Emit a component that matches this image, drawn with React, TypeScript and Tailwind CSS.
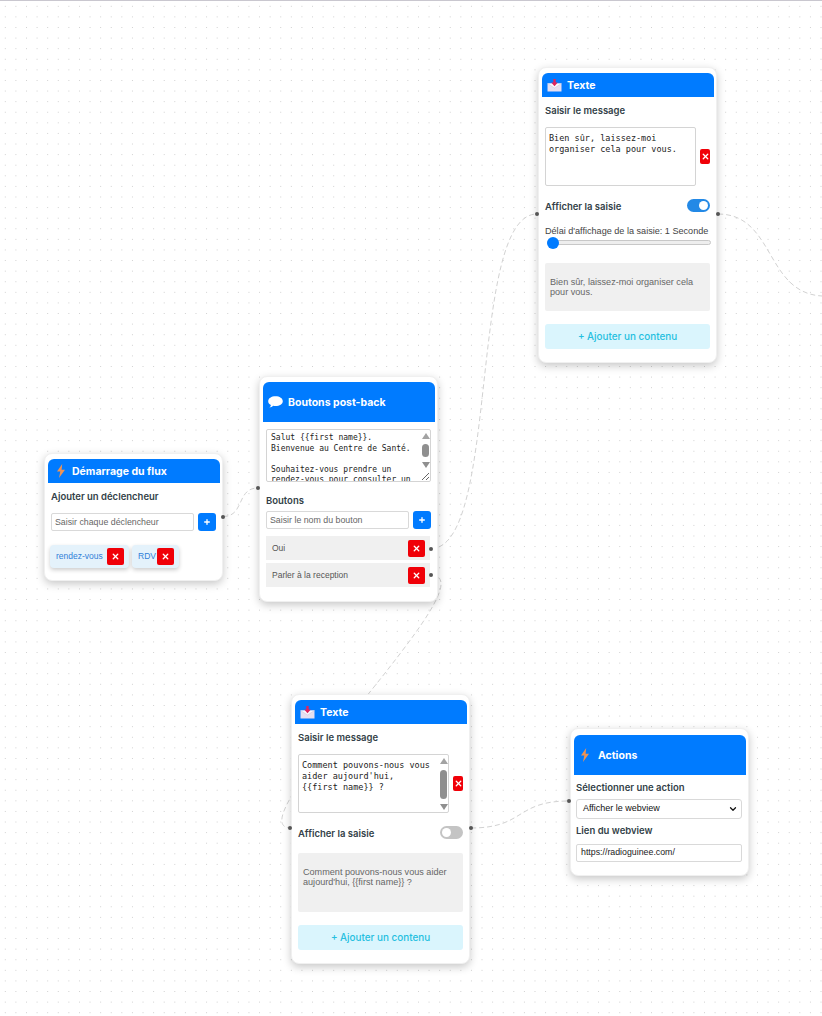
import React from 'react';
import { Plus, X, ChevronDown } from 'lucide-react';

const Bolt = () => (
  <svg width="10" height="14" viewBox="0 0 10 14" className="shrink-0">
    <path d="M6.2 0 L1 7.6 L4.3 7.6 L3 14 L9 5.8 L5.6 5.8 Z" fill="#ee9355" />
  </svg>
);

const Mail = () => (
  <svg width="15" height="13" viewBox="0 0 15 13" className="shrink-0">
    <path d="M0.5 4.5 L14.5 4.5 L14.5 12.5 L0.5 12.5 Z" fill="#e6dff0" />
    <path d="M0.5 4.5 L7.5 9 L14.5 4.5" fill="#fbf8fd" stroke="#cfc6dd" strokeWidth="0.6" />
    <path d="M6.3 0 L8.7 0 L8.7 3.4 L10.8 3.4 L7.5 7.2 L4.2 3.4 L6.3 3.4 Z" fill="#e0245e" />
  </svg>
);

const Bubble = () => (
  <svg width="15" height="12" viewBox="0 0 15 12" className="shrink-0">
    <path d="M7.5 0.3 C11.6 0.3 14.8 2.4 14.8 5.2 C14.8 8 11.6 10 7.5 10 C6.6 10 5.9 9.9 5.1 9.8 C4.2 10.8 2.8 11.5 1.4 11.6 C2.3 10.9 2.8 10 2.9 9 C1.2 8.1 0.2 6.8 0.2 5.2 C0.2 2.4 3.4 0.3 7.5 0.3 Z" fill="#fff" />
  </svg>
);

const Header = ({ icon, title, className = '' }: { icon: React.ReactNode; title: string; className?: string }) => (
  <div className={`flex items-center bg-[#007bff] rounded-t-[6px] text-white font-bold text-[10.5px] ${className}`}>
    {icon}
    <span className="pt-[2px]">{title}</span>
  </div>
);

const Handle = ({ className }: { className: string }) => (
  <div className={`absolute w-[4px] h-[4px] rounded-full bg-[#555] z-10 ${className}`} />
);

const Label = ({ children, className = '' }: { children: React.ReactNode; className?: string }) => (
  <div className={`text-[9.5px] font-semibold text-[#333f48] leading-[14px] ${className}`}>{children}</div>
);

const DelButton = ({ className = '' }: { className?: string }) => (
  <button className={`flex items-center justify-center bg-[#f00008] rounded-[2px] text-white shrink-0 ${className}`}>
    <X size={9} strokeWidth={3.5} />
  </button>
);

const AddButton = () => (
  <button className="w-[18px] h-[18px] rounded-[3px] bg-[#007bff] text-white flex items-center justify-center shrink-0">
    <Plus size={8} strokeWidth={4} />
  </button>
);

const FakeScrollbar = ({ className, thumb }: { className: string; thumb: string }) => (
  <div className={`absolute right-0 w-[11px] flex flex-col items-center justify-between ${className}`}>
    <div className="w-0 h-0 border-l-[4px] border-r-[4px] border-b-[6px] border-l-transparent border-r-transparent border-b-[#a3a3a3]" />
    <div className={`w-[7px] rounded-full bg-[#8f8f8f] ${thumb}`} />
    <div className="w-0 h-0 border-l-[4px] border-r-[4px] border-t-[6px] border-l-transparent border-r-transparent border-t-[#8f8f8f]" />
  </div>
);

const TextInput = ({ placeholder }: { placeholder: string }) => (
  <input
    placeholder={placeholder}
    className="flex-1 min-w-0 h-[18px] px-[3px] bg-white border border-[#d9d9d9] rounded-[2px] text-[8.8px] placeholder:text-[#666] outline-none"
  />
);

const Chip = ({ label, className = '' }: { label: string; className?: string }) => (
  <div className={`flex items-center justify-between h-[23px] pl-[6px] pr-[5px] rounded-[4px] bg-[#e4f2fb] shadow-[0_2px_4px_rgba(0,0,0,0.2)] text-[8.5px] text-[#2f80d8] ${className}`}>
    <span>{label}</span>
    <DelButton className="w-[17px] h-[17px]" />
  </div>
);

const ButtonRow = ({ label, className = '' }: { label: string; className?: string }) => (
  <div className={`flex items-center justify-between h-[24px] pl-[6px] pr-[5px] bg-[#f0f0f0] text-[8.5px] text-[#555] ${className}`}>
    <span>{label}</span>
    <DelButton className="w-[17px] h-[17px]" />
  </div>
);

const Toggle = ({ on }: { on: boolean }) => (
  <div className={`relative w-[23px] h-[13px] rounded-full ${on ? 'bg-[#2389e6]' : 'bg-[#c4c4c4]'}`}>
    <div className={`absolute top-[2px] w-[9px] h-[9px] rounded-full bg-white ${on ? 'right-[2px]' : 'left-[2px]'}`} />
  </div>
);

const AddContent = () => (
  <button className="block h-[25px] w-full rounded-[3px] bg-[#daf5fd] text-[#25bfe0] text-[9.9px] font-medium font-['Inter',sans-serif]">
    + Ajouter un contenu
  </button>
);

const Card = ({ className, children }: { className: string; children: React.ReactNode }) => (
  <div className={`absolute w-[179px] flex flex-col bg-white rounded-[8px] border border-[#f0f0f0] pl-[3px] pr-[2px] pt-[5px] shadow-[0_3px_8px_rgba(0,0,0,0.22)] font-['Inter',sans-serif] ${className}`}>
    {children}
  </div>
);

const monoArea = "block w-full h-full bg-white border border-[#d4d4d4] rounded-[2px] text-[#222] font-['DejaVu_Sans_Mono',monospace] outline-none overflow-hidden";

const StartNode = () => (
  <Card className="left-[44px] top-[453px] h-[128px]">
    <Header icon={<Bolt />} title="Démarrage du flux" className="h-[24px] pl-[8px] gap-[6px]" />
    <Label className="mt-[7px] ml-[3px]">Ajouter un déclencheur</Label>
    <div className="flex gap-[4px] mt-[9px] ml-[3px] mr-[4px] font-['Liberation_Sans',sans-serif]">
      <TextInput placeholder="Saisir chaque déclencheur" />
      <AddButton />
    </div>
    <div className="flex gap-[3px] mt-[14px] ml-[2px] font-['Liberation_Sans',sans-serif]">
      <Chip label="rendez-vous" className="w-[79px]" />
      <Chip label="RDV" className="w-[47px]" />
    </div>
    <Handle className="right-[-3px] top-[61px]" />
  </Card>
);

const ButtonsNode = () => (
  <Card className="left-[259px] top-[376px] h-[226px]">
    <Header icon={<Bubble />} title="Boutons post-back" className="h-[40px] pl-[5px] gap-[5px]" />
    <div className="relative h-[53px] mt-[7px] ml-[3px] mr-[4px]">
      <textarea
        readOnly
        className={`${monoArea} resize px-[4px] py-[3px] text-[8px] leading-[10.5px]`}
        value={"Salut {{first name}}.\nBienvenue au Centre de Santé.\n\nSouhaitez-vous prendre un\nrendez-vous pour consulter un"}
      />
      <FakeScrollbar className="top-[4px] h-[35px]" thumb="h-[13px]" />
    </div>
    <Label className="mt-[12px] ml-[3px]">Boutons</Label>
    <div className="flex gap-[4px] mt-[3px] ml-[3px] mr-[4px] font-['Liberation_Sans',sans-serif]">
      <TextInput placeholder="Saisir le nom du bouton" />
      <AddButton />
    </div>
    <div className="flex flex-col gap-[3px] mt-[7px] ml-[3px] mr-[5px] font-['Liberation_Sans',sans-serif]">
      <ButtonRow label="Oui" />
      <ButtonRow label="Parler à la reception" />
    </div>
    <Handle className="left-[-4px] top-[109px]" />
    <Handle className="right-[4px] top-[170px]" />
    <Handle className="right-[4px] top-[196px]" />
  </Card>
);

const TextNode = ({ className, message, preview, on, scroll, delay, previewClass, handleTop }: {
  className: string;
  message: string;
  preview: string;
  on: boolean;
  scroll?: boolean;
  delay?: boolean;
  previewClass: string;
  handleTop: string;
}) => (
  <Card className={className}>
    <Header icon={<Mail />} title="Texte" className="h-[24px] pl-[5px] gap-[5px]" />
    <Label className="mt-[7px] ml-[3px]">Saisir le message</Label>
    <div className="flex items-center gap-[4px] mt-[9px] ml-[3px] mr-[4px]">
      <div className="relative w-[151px] h-[59px]">
        <textarea readOnly className={`${monoArea} resize-none px-[3px] py-[5px] text-[8.5px] leading-[11px]`} value={message} />
        {scroll && <FakeScrollbar className="top-[4px] h-[52px]" thumb="h-[29px]" />}
      </div>
      <DelButton className="w-[10px] h-[15px]" />
    </div>
    <div className="flex items-start justify-between mt-[13px] ml-[3px] mr-[4px]">
      <Label className="pt-[1px]">Afficher la saisie</Label>
      <Toggle on={on} />
    </div>
    {delay && (
      <>
        <div className="mt-[10px] ml-[3px] text-[9.1px] leading-[14px] text-[#444] font-['Liberation_Sans',sans-serif] whitespace-nowrap">
          Délai d'affichage de la saisie: 1 Seconde
        </div>
        <div className="relative h-[5px] mt-[2px] ml-[5px] mr-[3px] rounded-full bg-[#eee] border border-[#c8c8c8]">
          <div className="absolute left-[-1px] top-[-4px] w-[12px] h-[12px] rounded-full bg-[#007bff]" />
        </div>
      </>
    )}
    <div className={`flex ml-[3px] mr-[4px] px-[5px] rounded-[2px] bg-[#f0f0f0] text-[9.1px] leading-[10px] text-[#666] font-['Liberation_Sans',sans-serif] ${previewClass}`}>
      <span>{preview}</span>
    </div>
    <div className="mt-[13px] ml-[3px] mr-[4px]">
      <AddContent />
    </div>
    <Handle className={`left-[-4px] ${handleTop}`} />
    <Handle className={`right-[-4px] ${handleTop}`} />
  </Card>
);

const ActionsNode = () => (
  <Card className="left-[570px] top-[728px] h-[148px]">
    <Header icon={<Bolt />} title="Actions" className="h-[40px] pl-[6px] gap-[8px] mt-[1px]" />
    <Label className="mt-[6px] ml-[2px]">Sélectionner une action</Label>
    <div className="flex items-center justify-between h-[20px] mt-[4px] ml-[2px] mr-[4px] pl-[6px] pr-[3px] border border-[#d9d9d9] rounded-[3px] text-[9px] text-[#111] font-['Liberation_Sans',sans-serif]">
      <span>Afficher le webview</span>
      <ChevronDown size={10} strokeWidth={3} />
    </div>
    <Label className="mt-[5px] ml-[2px]">Lien du webview</Label>
    <div className="flex items-center h-[18px] mt-[6px] ml-[2px] mr-[4px] pl-[4px] border border-[#d9d9d9] rounded-[2px] text-[8.8px] text-[#222] font-['Liberation_Sans',sans-serif]">
      https://radioguinee.com/
    </div>
    <Handle className="left-[-4px] top-[70px]" />
  </Card>
);

const Edges = () => (
  <svg className="absolute inset-0 w-full h-full" fill="none" stroke="#d2d2d2" strokeWidth="1" strokeDasharray="5 3">
    <path d="M223 516.5 C245 516.5 236 488 258 488" />
    <path d="M431 548.5 C500 548.5 468 214 537 214" />
    <path d="M431 575.5 C495 575.5 230 828 291 828" />
    <path d="M471 828 C525 828 515 801 569 801" />
    <path d="M718 214 C775 214 765 293 822 296" />
  </svg>
);

export default function App() {
  return (
    <div className="relative w-[822px] h-[1016px] overflow-hidden bg-white bg-[radial-gradient(#cfcfcf_0.8px,transparent_0.8px)] bg-[length:10.6px_10.6px] border-t border-[#c9c7cf]">
      <div className="absolute inset-0 top-[-1px]">
        <Edges />
        <StartNode />
        <ButtonsNode />
        <TextNode
          className="left-[538px] top-[67px] h-[296px]"
          message={"Bien sûr, laissez-moi\norganiser cela pour vous."}
          preview="Bien sûr, laissez-moi organiser cela pour vous."
          on
          delay
          previewClass="h-[48px] mt-[18px] items-center"
          handleTop="top-[144px]"
        />
        <TextNode
          className="left-[291px] top-[694px] h-[270px]"
          message={"Comment pouvons-nous vous\naider aujourd'hui,\n{{first name}} ?"}
          preview="Comment pouvons-nous vous aider aujourd'hui, {{first name}} ?"
          on={false}
          scroll
          previewClass="h-[59px] mt-[12px] items-start pt-[14px]"
          handleTop="top-[131px]"
        />
        <ActionsNode />
      </div>
    </div>
  );
}
